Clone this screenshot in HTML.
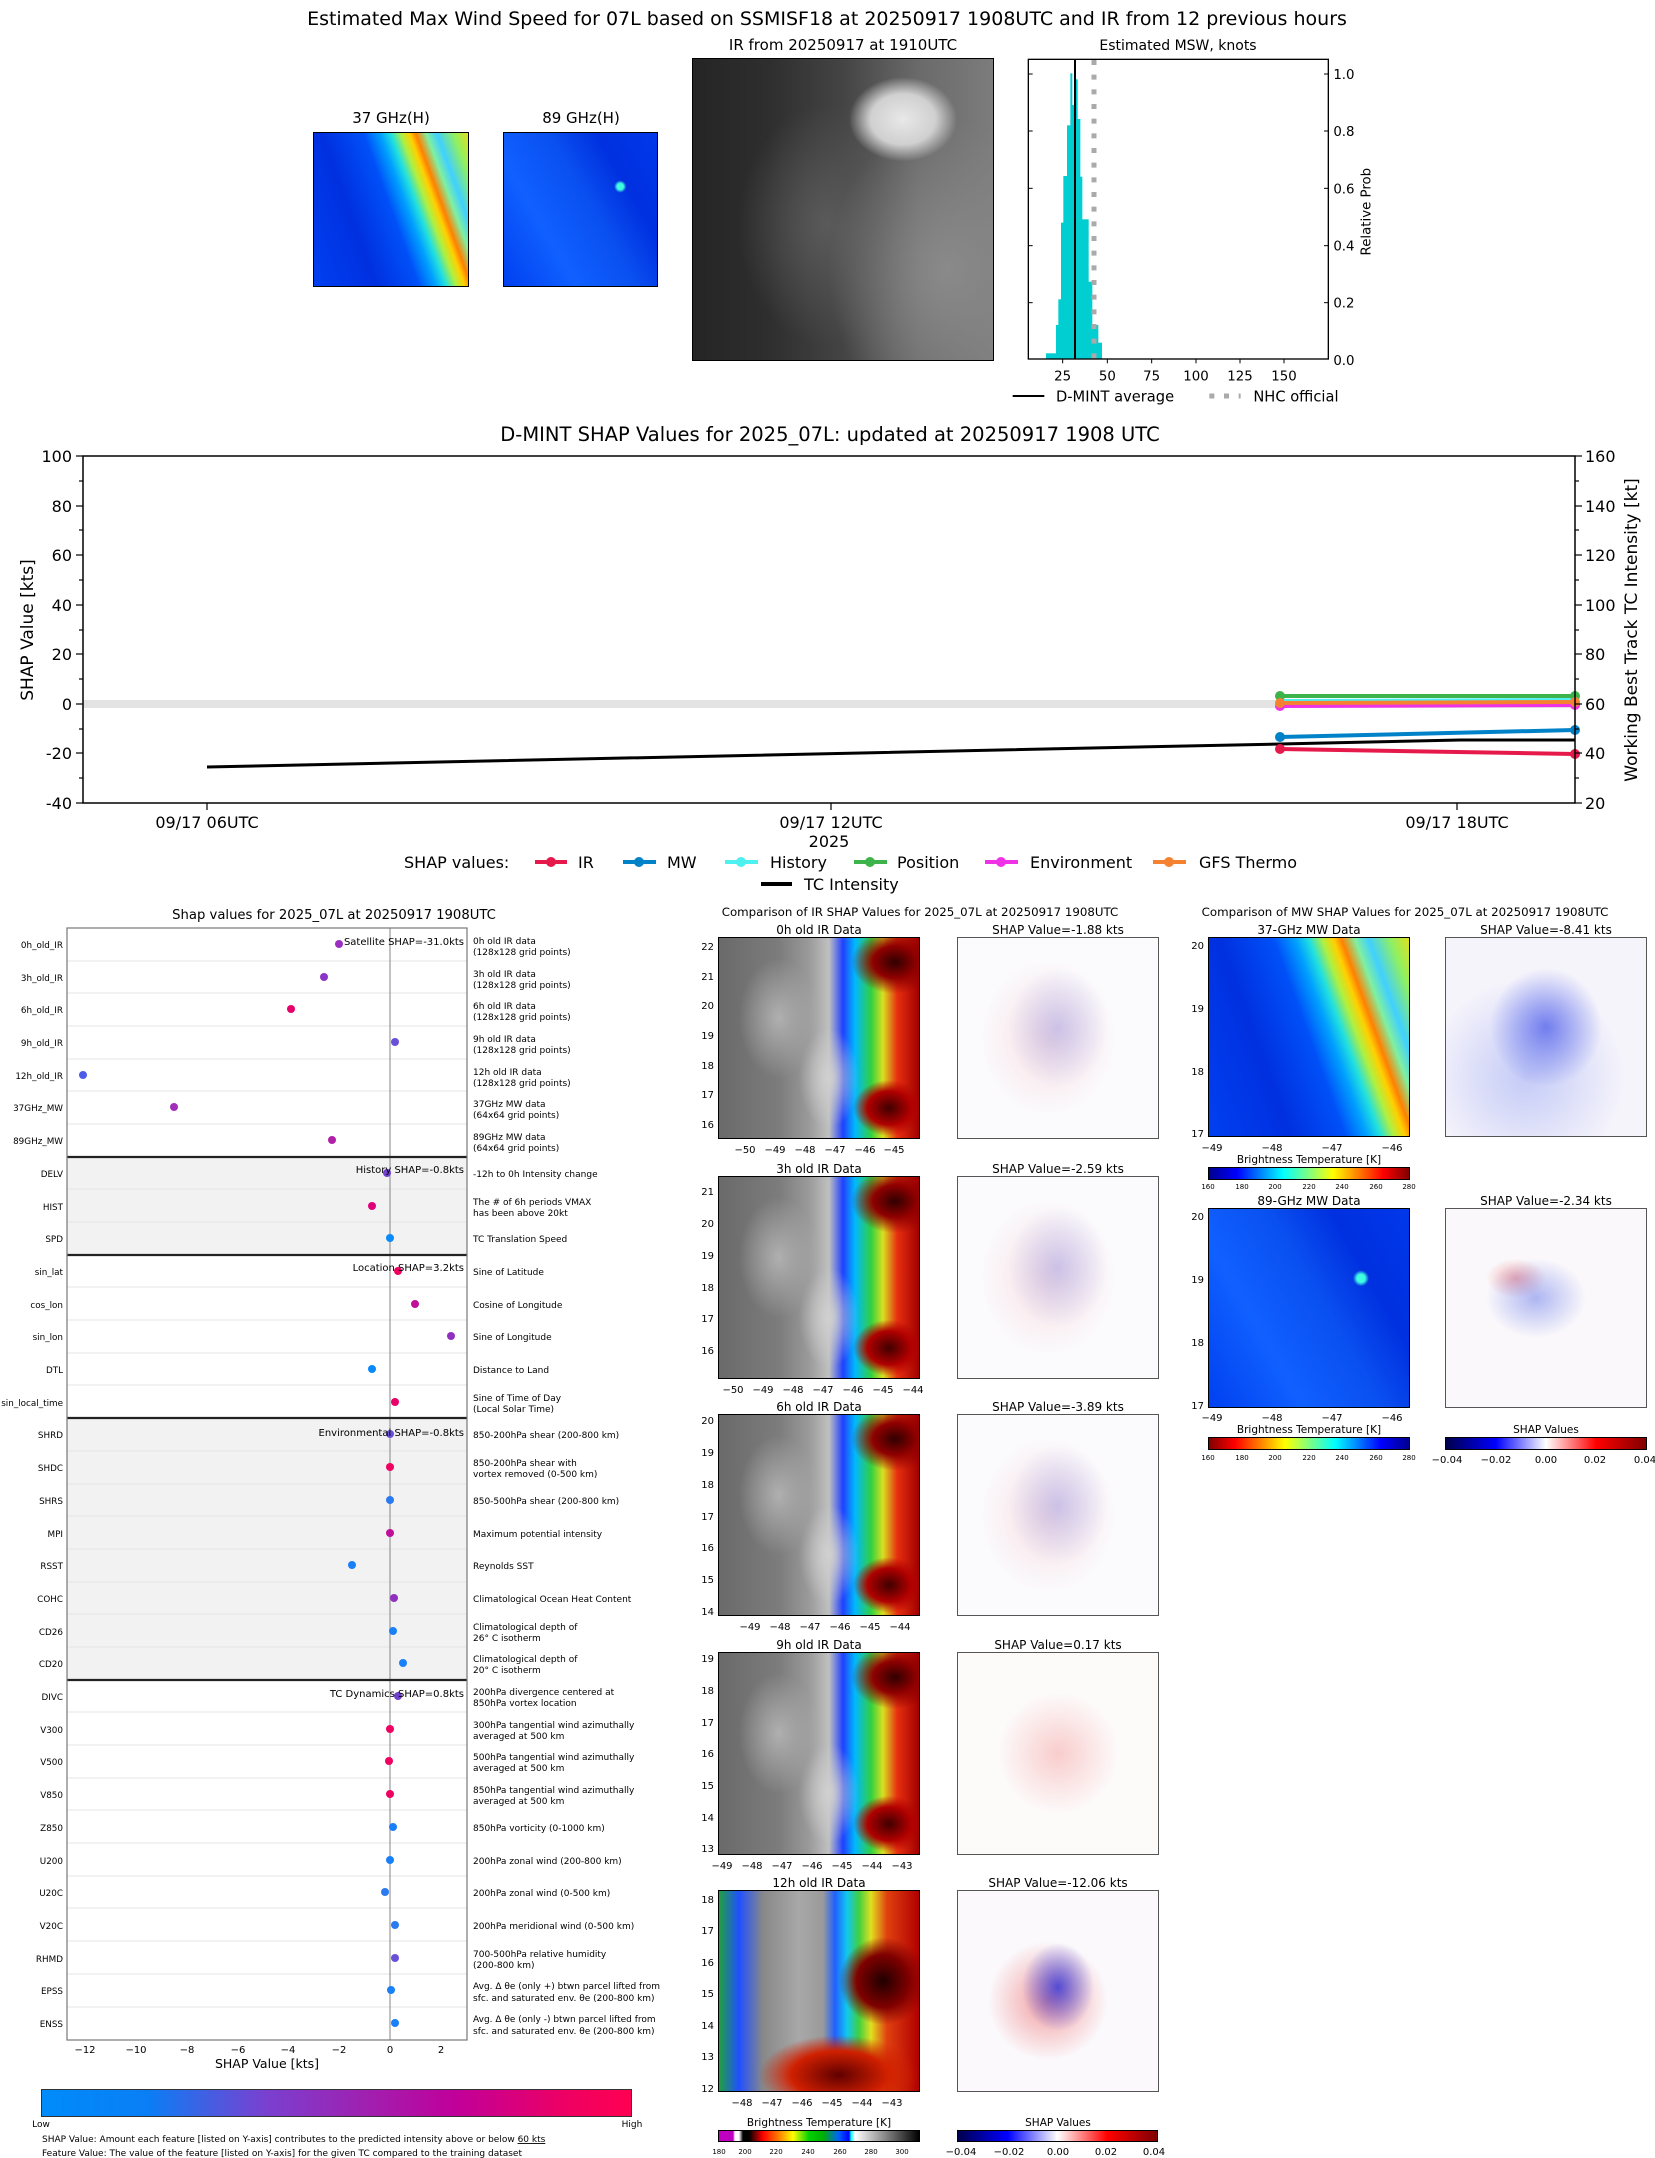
<!DOCTYPE html>
<html><head><meta charset="utf-8">
<style>
html,body{margin:0;padding:0;background:#fff}
body{width:1655px;height:2158px;position:relative;overflow:hidden;font-family:"DejaVu Sans","Liberation Sans",sans-serif}
.a{position:absolute}
svg{position:absolute;left:0;top:0}
text{font-family:"DejaVu Sans","Liberation Sans",sans-serif;fill:#000}
.ir{background:
 radial-gradient(ellipse 22% 16% at 88% 12%,#300000 0%,#900000 50%,rgba(200,0,0,0) 100%),
 radial-gradient(ellipse 18% 14% at 85% 85%,#400000 0%,#b00000 60%,rgba(200,0,0,0) 100%),
 radial-gradient(ellipse 20% 30% at 30% 40%,#b0b0b0 0%,rgba(160,160,160,0) 100%),
 radial-gradient(ellipse 15% 25% at 55% 70%,#d0d0d0 0%,rgba(200,200,200,0) 100%),
 linear-gradient(90deg,#6a6a6a 0%,#7c7c7c 30%,#9a9a9a 45%,#c0c0c0 55%,#2040ff 62%,#00b8ff 68%,#30d040 76%,#d8e020 82%,#e83010 89%,#a00000 100%);border:1px solid #000;box-sizing:border-box}
.sh{background:
 radial-gradient(ellipse 25% 30% at 50% 45%,rgba(120,130,230,.35),rgba(255,255,255,0) 100%),
 radial-gradient(ellipse 35% 40% at 45% 50%,rgba(240,140,140,.25),rgba(255,255,255,0) 100%),#fbfbfe;border:1px solid #555;box-sizing:border-box}
.m37{background:
 linear-gradient(70deg,#0040f0 0%,#0030e0 30%,#0050f8 50%,#00a0ff 58%,#20e0e0 63%,#b0f040 68%,#ffd000 72%,#ff8000 75%,#80f0a0 80%,#40d0ff 85%,#90f060 93%,#e0e020 100%);border:1px solid #000;box-sizing:border-box}
.m89{background:
 radial-gradient(circle at 76% 35%,#40ffe0 0,#40ffe0 2%,rgba(0,0,0,0) 4%),
 linear-gradient(60deg,#0040f0 0%,#1060ff 30%,#0a50f0 55%,#0030e0 75%,#0038ea 100%);border:1px solid #000;box-sizing:border-box}
</style></head><body>

<div class="a m37" style="left:313px;top:132px;width:156px;height:155px"></div>
<div class="a m89" style="left:503px;top:132px;width:155px;height:155px"></div>
<div class="a" style="left:692px;top:58px;width:302px;height:303px;border:1px solid #000;box-sizing:border-box;background:
 radial-gradient(ellipse 18% 14% at 70% 20%,#e8e8e8 0%,#d0d0d0 60%,rgba(200,200,200,0) 100%),
 radial-gradient(ellipse 40% 50% at 85% 70%,#8a8a8a 0%,rgba(120,120,120,0) 100%),
 radial-gradient(ellipse 30% 40% at 45% 55%,#5a5a5a 0%,rgba(80,80,80,0) 100%),
 linear-gradient(90deg,#252525 0%,#2e2e2e 25%,#444 50%,#6a6a6a 75%,#7c7c7c 100%)"></div>

<div class="a ir" style="left:718px;top:937px;width:202px;height:202px"></div>
<div class="a sh" style="left:957px;top:937px;width:202px;height:202px"></div>
<div class="a ir" style="left:718px;top:1176px;width:202px;height:203px"></div>
<div class="a sh" style="left:957px;top:1176px;width:202px;height:203px"></div>
<div class="a ir" style="left:718px;top:1414px;width:202px;height:202px"></div>
<div class="a sh" style="left:957px;top:1414px;width:202px;height:202px"></div>
<div class="a ir" style="left:718px;top:1652px;width:202px;height:203px"></div>
<div class="a sh" style="left:957px;top:1652px;width:202px;height:203px;background:radial-gradient(ellipse 30% 30% at 50% 50%,rgba(240,120,120,.35),rgba(255,255,255,0) 100%),#fdfafa"></div>
<div class="a ir" style="left:718px;top:1890px;width:202px;height:202px;background:
 radial-gradient(ellipse 22% 22% at 82% 45%,#200000 0%,#800000 60%,rgba(200,0,0,0) 100%),
 radial-gradient(ellipse 40% 20% at 60% 92%,#600000 0%,#d02000 60%,rgba(200,0,0,0) 100%),
 linear-gradient(90deg,#20a040 0%,#2050ff 10%,#888 22%,#a8a8a8 40%,#9a9a9a 52%,#2060ff 58%,#10c8f0 64%,#40d040 70%,#e0e020 76%,#e04010 84%,#b00000 100%)"></div>
<div class="a sh" style="left:957px;top:1890px;width:202px;height:202px;background:
 radial-gradient(ellipse 18% 22% at 50% 48%,rgba(30,40,220,.75),rgba(255,255,255,0) 100%),
 radial-gradient(ellipse 30% 30% at 45% 55%,rgba(230,40,40,.45),rgba(255,255,255,0) 100%),#fbf9fc"></div>

<div class="a m37" style="left:1208px;top:937px;width:202px;height:200px"></div>
<div class="a sh" style="left:1445px;top:937px;width:202px;height:200px;background:
 radial-gradient(ellipse 28% 30% at 50% 45%,rgba(40,60,230,.6),rgba(255,255,255,0) 100%),
 radial-gradient(ellipse 50% 50% at 40% 70%,rgba(120,140,240,.4),rgba(255,255,255,0) 100%),#f6f4fb"></div>
<div class="a m89" style="left:1208px;top:1208px;width:202px;height:200px"></div>
<div class="a sh" style="left:1445px;top:1208px;width:202px;height:200px;background:
 radial-gradient(ellipse 25% 20% at 45% 45%,rgba(80,100,230,.45),rgba(255,255,255,0) 100%),
 radial-gradient(ellipse 15% 10% at 35% 35%,rgba(230,60,60,.4),rgba(255,255,255,0) 100%),#faf8fb"></div>

<div class="a" style="left:1208px;top:1167px;width:202px;height:13px;border:1px solid #000;box-sizing:border-box;background:linear-gradient(90deg,#00008f,#0000ff 14%,#00ffff 37%,#80ff80 50%,#ffff00 62%,#ff0000 87%,#800000)"></div>
<div class="a" style="left:1208px;top:1437px;width:202px;height:13px;border:1px solid #000;box-sizing:border-box;background:linear-gradient(90deg,#800000,#ff0000 13%,#ffff00 38%,#80ff80 50%,#00ffff 63%,#0000ff 86%,#00008f)"></div>
<div class="a" style="left:1445px;top:1437px;width:202px;height:13px;border:1px solid #000;box-sizing:border-box;background:linear-gradient(90deg,#00004c,#0000ff 25%,#ffffff 50%,#ff0000 75%,#800000)"></div>
<div class="a" style="left:718px;top:2130px;width:202px;height:12px;border:1px solid #000;box-sizing:border-box;background:linear-gradient(90deg,#c000c0 0%,#c000c0 7%,#fff 8%,#fff 10%,#000 12%,#000 15%,#ff0000 22%,#ff8000 30%,#ffff00 37%,#00d000 45%,#00b000 52%,#0060ff 60%,#0000ff 65%,#00ffff 66%,#fff 68%,#a0a0a0 80%,#000 100%)"></div>
<div class="a" style="left:957px;top:2130px;width:201px;height:12px;border:1px solid #000;box-sizing:border-box;background:linear-gradient(90deg,#00004c,#0000ff 25%,#ffffff 50%,#ff0000 75%,#800000)"></div>
<div class="a" style="left:41px;top:2089px;width:591px;height:28px;border:1px solid #333;box-sizing:border-box;background:linear-gradient(90deg,#008bfb 0%,#0a7ef5 18%,#7a40d0 38%,#a020b0 55%,#c0009a 70%,#f00060 90%,#ff0052 100%)"></div>

<svg width="1655" height="2158" viewBox="0 0 1655 2158">
<text x="827" y="25" font-size="19" text-anchor="middle">Estimated Max Wind Speed for 07L based on SSMISF18 at 20250917 1908UTC and IR from 12 previous hours</text>
<text x="391" y="123" font-size="15" text-anchor="middle">37 GHz(H)</text>
<text x="581" y="123" font-size="15" text-anchor="middle">89 GHz(H)</text>
<text x="843" y="50" font-size="15" text-anchor="middle">IR from 20250917 at 1910UTC</text>
<text x="1178" y="50" font-size="14" text-anchor="middle">Estimated MSW, knots</text>

<g transform="translate(1000,40) scale(0.33333)">
<g fill="#00ced1">
<rect x="138" y="940" width="30" height="17"/>
<rect x="168" y="855" width="8" height="102"/>
<rect x="175" y="778" width="9" height="179"/>
<rect x="183" y="548" width="8" height="409"/>
<rect x="190" y="408" width="12" height="549"/>
<rect x="201" y="256" width="11" height="701"/>
<rect x="211" y="100" width="6" height="857"/>
<rect x="216" y="195" width="11" height="762"/>
<rect x="226" y="118" width="7" height="839"/>
<rect x="232" y="237" width="9" height="720"/>
<rect x="240" y="410" width="7" height="547"/>
<rect x="246" y="538" width="20" height="419"/>
<rect x="265" y="725" width="12" height="232"/>
<rect x="276" y="855" width="19" height="102"/>
<rect x="294" y="908" width="12" height="49"/>
</g>
<line x1="225" y1="58" x2="225" y2="957" stroke="#000" stroke-width="6"/>
<line x1="282" y1="60" x2="282" y2="957" stroke="#aaa" stroke-width="15" stroke-dasharray="15 29"/>
<rect x="85" y="58" width="900" height="899" fill="none" stroke="#000" stroke-width="4"/>
<g stroke="#000" stroke-width="3">
<line x1="188" y1="957" x2="188" y2="970"/><line x1="322" y1="957" x2="322" y2="970"/><line x1="455" y1="957" x2="455" y2="970"/><line x1="588" y1="957" x2="588" y2="970"/><line x1="720" y1="957" x2="720" y2="970"/><line x1="852" y1="957" x2="852" y2="970"/>
<line x1="985" y1="102" x2="972" y2="102"/><line x1="985" y1="273" x2="972" y2="273"/><line x1="985" y1="445" x2="972" y2="445"/><line x1="985" y1="617" x2="972" y2="617"/><line x1="985" y1="788" x2="972" y2="788"/><line x1="985" y1="957" x2="972" y2="957"/>
<line x1="85" y1="102" x2="98" y2="102"/><line x1="85" y1="273" x2="98" y2="273"/><line x1="85" y1="445" x2="98" y2="445"/><line x1="85" y1="617" x2="98" y2="617"/><line x1="85" y1="788" x2="98" y2="788"/>
</g>
<g font-size="40" text-anchor="middle">
<text x="188" y="1022">25</text><text x="322" y="1022">50</text><text x="455" y="1022">75</text><text x="588" y="1022">100</text><text x="720" y="1022">125</text><text x="852" y="1022">150</text>
</g>
<g font-size="40">
<text x="1000" y="117">1.0</text><text x="1000" y="288">0.8</text><text x="1000" y="460">0.6</text><text x="1000" y="632">0.4</text><text x="1000" y="803">0.2</text><text x="1000" y="975">0.0</text>
</g>
<text transform="translate(1112,515) rotate(-90)" font-size="40" text-anchor="middle">Relative Prob</text>
<line x1="38" y1="1068" x2="133" y2="1068" stroke="#000" stroke-width="6"/>
<text x="168" y="1084" font-size="44">D-MINT average</text>
<line x1="628" y1="1068" x2="722" y2="1068" stroke="#aaa" stroke-width="15" stroke-dasharray="15 29"/>
<text x="760" y="1084" font-size="44">NHC official</text>
</g>

<text x="830" y="441" font-size="19.5" text-anchor="middle">D-MINT SHAP Values for 2025_07L: updated at 20250917 1908 UTC</text>
<rect x="83" y="700" width="1492" height="8" fill="#e3e3e3"/>
<polyline points="207,767 1280,744 1460,740 1575,740" fill="none" stroke="#000" stroke-width="3"/>
<g stroke-width="4" fill="none">
<line x1="1280" y1="696" x2="1575" y2="696" stroke="#3cb44b"/>
<line x1="1280" y1="701" x2="1575" y2="700" stroke="#4ef0f0"/>
<line x1="1280" y1="706" x2="1575" y2="705" stroke="#f032e6"/>
<line x1="1280" y1="703" x2="1575" y2="702" stroke="#f58231"/>
<line x1="1280" y1="737" x2="1575" y2="730" stroke="#0082c8"/>
<line x1="1280" y1="749" x2="1575" y2="754" stroke="#e6194b"/>
</g>
<g>
<circle cx="1280" cy="696" r="5" fill="#3cb44b"/><circle cx="1575" cy="696" r="5" fill="#3cb44b"/>
<circle cx="1280" cy="706" r="5" fill="#f032e6"/><circle cx="1575" cy="705" r="5" fill="#f032e6"/>
<circle cx="1280" cy="703" r="5" fill="#f58231"/><circle cx="1575" cy="702" r="5" fill="#f58231"/>
<circle cx="1280" cy="737" r="5" fill="#0082c8"/><circle cx="1575" cy="730" r="5" fill="#0082c8"/>
<circle cx="1280" cy="749" r="5" fill="#e6194b"/><circle cx="1575" cy="754" r="5" fill="#e6194b"/>
</g>
<rect x="83" y="456" width="1492" height="347" fill="none" stroke="#000" stroke-width="1.5"/>
<g stroke="#000" stroke-width="1.2">
<line x1="83" y1="456" x2="76" y2="456"/><line x1="83" y1="506" x2="76" y2="506"/><line x1="83" y1="555" x2="76" y2="555"/><line x1="83" y1="605" x2="76" y2="605"/><line x1="83" y1="654" x2="76" y2="654"/><line x1="83" y1="704" x2="76" y2="704"/><line x1="83" y1="753" x2="76" y2="753"/><line x1="83" y1="803" x2="76" y2="803"/>
<line x1="83" y1="481" x2="79" y2="481"/><line x1="83" y1="530" x2="79" y2="530"/><line x1="83" y1="580" x2="79" y2="580"/><line x1="83" y1="630" x2="79" y2="630"/><line x1="83" y1="679" x2="79" y2="679"/><line x1="83" y1="729" x2="79" y2="729"/><line x1="83" y1="778" x2="79" y2="778"/>
<line x1="1575" y1="456" x2="1582" y2="456"/><line x1="1575" y1="506" x2="1582" y2="506"/><line x1="1575" y1="555" x2="1582" y2="555"/><line x1="1575" y1="605" x2="1582" y2="605"/><line x1="1575" y1="654" x2="1582" y2="654"/><line x1="1575" y1="704" x2="1582" y2="704"/><line x1="1575" y1="753" x2="1582" y2="753"/><line x1="1575" y1="803" x2="1582" y2="803"/>
<line x1="1575" y1="481" x2="1579" y2="481"/><line x1="1575" y1="530" x2="1579" y2="530"/><line x1="1575" y1="580" x2="1579" y2="580"/><line x1="1575" y1="630" x2="1579" y2="630"/><line x1="1575" y1="679" x2="1579" y2="679"/><line x1="1575" y1="729" x2="1579" y2="729"/><line x1="1575" y1="778" x2="1579" y2="778"/>
<line x1="207" y1="803" x2="207" y2="810"/><line x1="831" y1="803" x2="831" y2="810"/><line x1="1457" y1="803" x2="1457" y2="810"/>
</g>
<g font-size="16" text-anchor="end">
<text x="72" y="462">100</text><text x="72" y="512">80</text><text x="72" y="561">60</text><text x="72" y="611">40</text><text x="72" y="660">20</text><text x="72" y="710">0</text><text x="72" y="759">-20</text><text x="72" y="809">-40</text>
</g>
<g font-size="16">
<text x="1585" y="462">160</text><text x="1585" y="512">140</text><text x="1585" y="561">120</text><text x="1585" y="611">100</text><text x="1585" y="660">80</text><text x="1585" y="710">60</text><text x="1585" y="759">40</text><text x="1585" y="809">20</text>
</g>
<text transform="translate(33,630) rotate(-90)" font-size="17" text-anchor="middle">SHAP Value [kts]</text>
<text transform="translate(1637,630) rotate(-90)" font-size="17" text-anchor="middle">Working Best Track TC Intensity [kt]</text>
<g font-size="16" text-anchor="middle">
<text x="207" y="828">09/17 06UTC</text><text x="831" y="828">09/17 12UTC</text><text x="1457" y="828">09/17 18UTC</text>
<text x="829" y="847">2025</text>
</g>
<g font-size="16">
<text x="404" y="868">SHAP values:</text>
<line x1="535" y1="862" x2="567" y2="862" stroke="#e6194b" stroke-width="4"/><circle cx="551" cy="862" r="5" fill="#e6194b"/><text x="578" y="868">IR</text>
<line x1="623" y1="862" x2="656" y2="862" stroke="#0082c8" stroke-width="4"/><circle cx="639" cy="862" r="5" fill="#0082c8"/><text x="667" y="868">MW</text>
<line x1="725" y1="862" x2="758" y2="862" stroke="#4ef0f0" stroke-width="4"/><circle cx="741" cy="862" r="5" fill="#4ef0f0"/><text x="770" y="868">History</text>
<line x1="854" y1="862" x2="887" y2="862" stroke="#3cb44b" stroke-width="4"/><circle cx="870" cy="862" r="5" fill="#3cb44b"/><text x="897" y="868">Position</text>
<line x1="985" y1="862" x2="1018" y2="862" stroke="#f032e6" stroke-width="4"/><circle cx="1001" cy="862" r="5" fill="#f032e6"/><text x="1030" y="868">Environment</text>
<line x1="1153" y1="862" x2="1186" y2="862" stroke="#f58231" stroke-width="4"/><circle cx="1169" cy="862" r="5" fill="#f58231"/><text x="1199" y="868">GFS Thermo</text>
<line x1="761" y1="884" x2="792" y2="884" stroke="#000" stroke-width="4"/><text x="804" y="890">TC Intensity</text>
</g>

<text x="334" y="919" font-size="13.2" text-anchor="middle">Shap values for 2025_07L at 20250917 1908UTC</text>
<rect x="67" y="1157" width="400" height="98" fill="#f2f2f2"/>
<rect x="67" y="1418" width="400" height="262" fill="#f2f2f2"/>
<g stroke="#e4e4e4" stroke-width="1">
<line x1="67" y1="961" x2="467" y2="961"/><line x1="67" y1="993" x2="467" y2="993"/><line x1="67" y1="1026" x2="467" y2="1026"/><line x1="67" y1="1059" x2="467" y2="1059"/><line x1="67" y1="1091" x2="467" y2="1091"/><line x1="67" y1="1124" x2="467" y2="1124"/>
<line x1="67" y1="1189" x2="467" y2="1189"/><line x1="67" y1="1222" x2="467" y2="1222"/>
<line x1="67" y1="1287" x2="467" y2="1287"/><line x1="67" y1="1320" x2="467" y2="1320"/><line x1="67" y1="1353" x2="467" y2="1353"/><line x1="67" y1="1385" x2="467" y2="1385"/>
<line x1="67" y1="1451" x2="467" y2="1451"/><line x1="67" y1="1484" x2="467" y2="1484"/><line x1="67" y1="1516" x2="467" y2="1516"/><line x1="67" y1="1549" x2="467" y2="1549"/><line x1="67" y1="1582" x2="467" y2="1582"/><line x1="67" y1="1614" x2="467" y2="1614"/><line x1="67" y1="1647" x2="467" y2="1647"/>
<line x1="67" y1="1712" x2="467" y2="1712"/><line x1="67" y1="1745" x2="467" y2="1745"/><line x1="67" y1="1778" x2="467" y2="1778"/><line x1="67" y1="1810" x2="467" y2="1810"/><line x1="67" y1="1843" x2="467" y2="1843"/><line x1="67" y1="1876" x2="467" y2="1876"/><line x1="67" y1="1908" x2="467" y2="1908"/><line x1="67" y1="1941" x2="467" y2="1941"/><line x1="67" y1="1974" x2="467" y2="1974"/><line x1="67" y1="2007" x2="467" y2="2007"/>
</g>
<line x1="390" y1="928" x2="390" y2="2040" stroke="#999" stroke-width="1.2"/>
<g stroke="#222" stroke-width="2.2">
<line x1="67" y1="1157" x2="467" y2="1157"/><line x1="67" y1="1255" x2="467" y2="1255"/><line x1="67" y1="1418" x2="467" y2="1418"/><line x1="67" y1="1680" x2="467" y2="1680"/>
</g>
<rect x="67" y="928" width="400" height="1112" fill="none" stroke="#777" stroke-width="1.2"/>
<g>
<circle cx="339" cy="944" r="4" fill="#9b30c0"/><circle cx="324" cy="977" r="4" fill="#8a35c8"/><circle cx="291" cy="1009" r="4" fill="#e8006a"/><circle cx="395" cy="1042" r="4" fill="#6a50d8"/><circle cx="83" cy="1075" r="4" fill="#4d5ce6"/><circle cx="174" cy="1107" r="4" fill="#a030b8"/><circle cx="332" cy="1140" r="4" fill="#b020a8"/>
<circle cx="387" cy="1173" r="4" fill="#7040d0"/><circle cx="372" cy="1206" r="4" fill="#e0007a"/><circle cx="390" cy="1238" r="4" fill="#0a8af8"/>
<circle cx="398" cy="1271" r="4" fill="#f00060"/><circle cx="415" cy="1304" r="4" fill="#c0109a"/><circle cx="451" cy="1336" r="4" fill="#9030c0"/><circle cx="372" cy="1369" r="4" fill="#0a8af8"/><circle cx="395" cy="1402" r="4" fill="#e8006a"/>
<circle cx="390" cy="1434" r="4" fill="#6a50d8"/><circle cx="390" cy="1467" r="4" fill="#f00060"/><circle cx="390" cy="1500" r="4" fill="#2a7af0"/><circle cx="390" cy="1533" r="4" fill="#c0109a"/><circle cx="352" cy="1565" r="4" fill="#1a80f8"/><circle cx="394" cy="1598" r="4" fill="#9030c0"/><circle cx="393" cy="1631" r="4" fill="#1a80f8"/><circle cx="403" cy="1663" r="4" fill="#1a80f8"/>
<circle cx="398" cy="1696" r="4" fill="#7040d0"/><circle cx="390" cy="1729" r="4" fill="#f00060"/><circle cx="389" cy="1761" r="4" fill="#f00060"/><circle cx="390" cy="1794" r="4" fill="#f00060"/><circle cx="393" cy="1827" r="4" fill="#1a80f8"/><circle cx="390" cy="1860" r="4" fill="#1a80f8"/><circle cx="385" cy="1892" r="4" fill="#2a7af0"/><circle cx="395" cy="1925" r="4" fill="#2a7af0"/><circle cx="395" cy="1958" r="4" fill="#6a50d8"/><circle cx="391" cy="1990" r="4" fill="#1a80f8"/><circle cx="395" cy="2023" r="4" fill="#1a80f8"/>
</g>
<g font-size="8.8" text-anchor="end">
<text x="63" y="948">0h_old_IR</text><text x="63" y="981">3h_old_IR</text><text x="63" y="1013">6h_old_IR</text><text x="63" y="1046">9h_old_IR</text><text x="63" y="1079">12h_old_IR</text><text x="63" y="1111">37GHz_MW</text><text x="63" y="1144">89GHz_MW</text>
<text x="63" y="1177">DELV</text><text x="63" y="1210">HIST</text><text x="63" y="1242">SPD</text>
<text x="63" y="1275">sin_lat</text><text x="63" y="1308">cos_lon</text><text x="63" y="1340">sin_lon</text><text x="63" y="1373">DTL</text><text x="63" y="1406">sin_local_time</text>
<text x="63" y="1438">SHRD</text><text x="63" y="1471">SHDC</text><text x="63" y="1504">SHRS</text><text x="63" y="1537">MPI</text><text x="63" y="1569">RSST</text><text x="63" y="1602">COHC</text><text x="63" y="1635">CD26</text><text x="63" y="1667">CD20</text>
<text x="63" y="1700">DIVC</text><text x="63" y="1733">V300</text><text x="63" y="1765">V500</text><text x="63" y="1798">V850</text><text x="63" y="1831">Z850</text><text x="63" y="1864">U200</text><text x="63" y="1896">U20C</text><text x="63" y="1929">V20C</text><text x="63" y="1962">RHMD</text><text x="63" y="1994">EPSS</text><text x="63" y="2027">ENSS</text>
</g>
<g font-size="10" text-anchor="end">
<text x="464" y="945">Satellite SHAP=-31.0kts</text>
<text x="464" y="1173">History SHAP=-0.8kts</text>
<text x="464" y="1271">Location SHAP=3.2kts</text>
<text x="464" y="1436">Environmental SHAP=-0.8kts</text>
<text x="464" y="1697">TC Dynamics SHAP=0.8kts</text>
</g>
<g font-size="9">
<text x="473" y="944">0h old IR data</text><text x="473" y="955">(128x128 grid points)</text>
<text x="473" y="977">3h old IR data</text><text x="473" y="988">(128x128 grid points)</text>
<text x="473" y="1009">6h old IR data</text><text x="473" y="1020">(128x128 grid points)</text>
<text x="473" y="1042">9h old IR data</text><text x="473" y="1053">(128x128 grid points)</text>
<text x="473" y="1075">12h old IR data</text><text x="473" y="1086">(128x128 grid points)</text>
<text x="473" y="1107">37GHz MW data</text><text x="473" y="1118">(64x64 grid points)</text>
<text x="473" y="1140">89GHz MW data</text><text x="473" y="1151">(64x64 grid points)</text>
<text x="473" y="1177">-12h to 0h Intensity change</text>
<text x="473" y="1205">The # of 6h periods VMAX</text><text x="473" y="1216">has been above 20kt</text>
<text x="473" y="1242">TC Translation Speed</text>
<text x="473" y="1275">Sine of Latitude</text>
<text x="473" y="1308">Cosine of Longitude</text>
<text x="473" y="1340">Sine of Longitude</text>
<text x="473" y="1373">Distance to Land</text>
<text x="473" y="1401">Sine of Time of Day</text><text x="473" y="1412">(Local Solar Time)</text>
<text x="473" y="1438">850-200hPa shear (200-800 km)</text>
<text x="473" y="1466">850-200hPa shear with</text><text x="473" y="1477">vortex removed (0-500 km)</text>
<text x="473" y="1504">850-500hPa shear (200-800 km)</text>
<text x="473" y="1537">Maximum potential intensity</text>
<text x="473" y="1569">Reynolds SST</text>
<text x="473" y="1602">Climatological Ocean Heat Content</text>
<text x="473" y="1630">Climatological depth of</text><text x="473" y="1641">26° C isotherm</text>
<text x="473" y="1662">Climatological depth of</text><text x="473" y="1673">20° C isotherm</text>
<text x="473" y="1695">200hPa divergence centered at</text><text x="473" y="1706">850hPa vortex location</text>
<text x="473" y="1728">300hPa tangential wind azimuthally</text><text x="473" y="1739">averaged at 500 km</text>
<text x="473" y="1760">500hPa tangential wind azimuthally</text><text x="473" y="1771">averaged at 500 km</text>
<text x="473" y="1793">850hPa tangential wind azimuthally</text><text x="473" y="1804">averaged at 500 km</text>
<text x="473" y="1831">850hPa vorticity (0-1000 km)</text>
<text x="473" y="1864">200hPa zonal wind (200-800 km)</text>
<text x="473" y="1896">200hPa zonal wind (0-500 km)</text>
<text x="473" y="1929">200hPa meridional wind (0-500 km)</text>
<text x="473" y="1957">700-500hPa relative humidity</text><text x="473" y="1968">(200-800 km)</text>
<text x="473" y="1989">Avg. Δ θe (only +) btwn parcel lifted from</text><text x="473" y="2001">sfc. and saturated env. θe (200-800 km)</text>
<text x="473" y="2022">Avg. Δ θe (only -) btwn parcel lifted from</text><text x="473" y="2034">sfc. and saturated env. θe (200-800 km)</text>
</g>
<g font-size="10" text-anchor="middle">
<text x="85" y="2053">−12</text><text x="136" y="2053">−10</text><text x="187" y="2053">−8</text><text x="238" y="2053">−6</text><text x="288" y="2053">−4</text><text x="339" y="2053">−2</text><text x="390" y="2053">0</text><text x="441" y="2053">2</text>
</g>
<text x="267" y="2068" font-size="12.5" text-anchor="middle">SHAP Value [kts]</text>
<text x="41" y="2127" font-size="9" text-anchor="middle">Low</text>
<text x="632" y="2127" font-size="9" text-anchor="middle">High</text>
<text x="42" y="2142" font-size="9">SHAP Value: Amount each feature [listed on Y-axis] contributes to the predicted intensity above or below <tspan text-decoration="underline">60 kts</tspan></text>
<text x="42" y="2156" font-size="9">Feature Value: The value of the feature [listed on Y-axis] for the given TC compared to the training dataset</text>

<text x="920" y="916" font-size="11.8" text-anchor="middle">Comparison of IR SHAP Values for 2025_07L at 20250917 1908UTC</text>
<text x="1405" y="916" font-size="11.8" text-anchor="middle">Comparison of MW SHAP Values for 2025_07L at 20250917 1908UTC</text>
<g font-size="12" text-anchor="middle">
<text x="819" y="934">0h old IR Data</text><text x="1058" y="934">SHAP Value=-1.88 kts</text>
<text x="819" y="1173">3h old IR Data</text><text x="1058" y="1173">SHAP Value=-2.59 kts</text>
<text x="819" y="1411">6h old IR Data</text><text x="1058" y="1411">SHAP Value=-3.89 kts</text>
<text x="819" y="1649">9h old IR Data</text><text x="1058" y="1649">SHAP Value=0.17 kts</text>
<text x="819" y="1887">12h old IR Data</text><text x="1058" y="1887">SHAP Value=-12.06 kts</text>
<text x="1309" y="934">37-GHz MW Data</text><text x="1546" y="934">SHAP Value=-8.41 kts</text>
<text x="1309" y="1205">89-GHz MW Data</text><text x="1546" y="1205">SHAP Value=-2.34 kts</text>
</g>
<g font-size="10.5" text-anchor="middle">
<text x="819" y="2126">Brightness Temperature [K]</text><text x="1058" y="2126">SHAP Values</text>
<text x="1309" y="1163">Brightness Temperature [K]</text>
<text x="1309" y="1433">Brightness Temperature [K]</text><text x="1546" y="1433">SHAP Values</text>
</g>
<g font-size="7" text-anchor="middle">
<text x="719" y="2154">180</text><text x="745" y="2154">200</text><text x="776" y="2154">220</text><text x="808" y="2154">240</text><text x="840" y="2154">260</text><text x="871" y="2154">280</text><text x="902" y="2154">300</text>
<text x="1208" y="1189">160</text><text x="1242" y="1189">180</text><text x="1275" y="1189">200</text><text x="1309" y="1189">220</text><text x="1342" y="1189">240</text><text x="1376" y="1189">260</text><text x="1409" y="1189">280</text>
<text x="1208" y="1460">160</text><text x="1242" y="1460">180</text><text x="1275" y="1460">200</text><text x="1309" y="1460">220</text><text x="1342" y="1460">240</text><text x="1376" y="1460">260</text><text x="1409" y="1460">280</text>
</g>
<g font-size="10" text-anchor="middle">
<text x="961" y="2155">−0.04</text><text x="1009" y="2155">−0.02</text><text x="1058" y="2155">0.00</text><text x="1106" y="2155">0.02</text><text x="1154" y="2155">0.04</text>
<text x="1447" y="1463">−0.04</text><text x="1496" y="1463">−0.02</text><text x="1546" y="1463">0.00</text><text x="1595" y="1463">0.02</text><text x="1645" y="1463">0.04</text>
</g>
<g font-size="10" text-anchor="end">
<text x="714" y="950">22</text><text x="714" y="980">21</text><text x="714" y="1009">20</text><text x="714" y="1039">19</text><text x="714" y="1069">18</text><text x="714" y="1098">17</text><text x="714" y="1128">16</text>
<text x="714" y="1195">21</text><text x="714" y="1227">20</text><text x="714" y="1259">19</text><text x="714" y="1291">18</text><text x="714" y="1322">17</text><text x="714" y="1354">16</text>
<text x="714" y="1424">20</text><text x="714" y="1456">19</text><text x="714" y="1488">18</text><text x="714" y="1520">17</text><text x="714" y="1551">16</text><text x="714" y="1583">15</text><text x="714" y="1615">14</text>
<text x="714" y="1662">19</text><text x="714" y="1694">18</text><text x="714" y="1726">17</text><text x="714" y="1757">16</text><text x="714" y="1789">15</text><text x="714" y="1821">14</text><text x="714" y="1852">13</text>
<text x="714" y="1903">18</text><text x="714" y="1934">17</text><text x="714" y="1966">16</text><text x="714" y="1997">15</text><text x="714" y="2029">14</text><text x="714" y="2060">13</text><text x="714" y="2092">12</text>
<text x="1204" y="949">20</text><text x="1204" y="1012">19</text><text x="1204" y="1075">18</text><text x="1204" y="1137">17</text>
<text x="1204" y="1220">20</text><text x="1204" y="1283">19</text><text x="1204" y="1346">18</text><text x="1204" y="1409">17</text>
</g>
<g font-size="10" text-anchor="middle">
<text x="745" y="1153">−50</text><text x="775" y="1153">−49</text><text x="805" y="1153">−48</text><text x="835" y="1153">−47</text><text x="865" y="1153">−46</text><text x="894" y="1153">−45</text>
<text x="733" y="1393">−50</text><text x="763" y="1393">−49</text><text x="793" y="1393">−48</text><text x="823" y="1393">−47</text><text x="853" y="1393">−46</text><text x="883" y="1393">−45</text><text x="913" y="1393">−44</text>
<text x="750" y="1630">−49</text><text x="780" y="1630">−48</text><text x="810" y="1630">−47</text><text x="840" y="1630">−46</text><text x="870" y="1630">−45</text><text x="900" y="1630">−44</text>
<text x="722" y="1869">−49</text><text x="752" y="1869">−48</text><text x="782" y="1869">−47</text><text x="812" y="1869">−46</text><text x="842" y="1869">−45</text><text x="872" y="1869">−44</text><text x="902" y="1869">−43</text>
<text x="742" y="2106">−48</text><text x="772" y="2106">−47</text><text x="802" y="2106">−46</text><text x="832" y="2106">−45</text><text x="862" y="2106">−44</text><text x="892" y="2106">−43</text>
<text x="1212" y="1151">−49</text><text x="1272" y="1151">−48</text><text x="1332" y="1151">−47</text><text x="1392" y="1151">−46</text>
<text x="1212" y="1421">−49</text><text x="1272" y="1421">−48</text><text x="1332" y="1421">−47</text><text x="1392" y="1421">−46</text>
</g>
</svg>
</body></html>
